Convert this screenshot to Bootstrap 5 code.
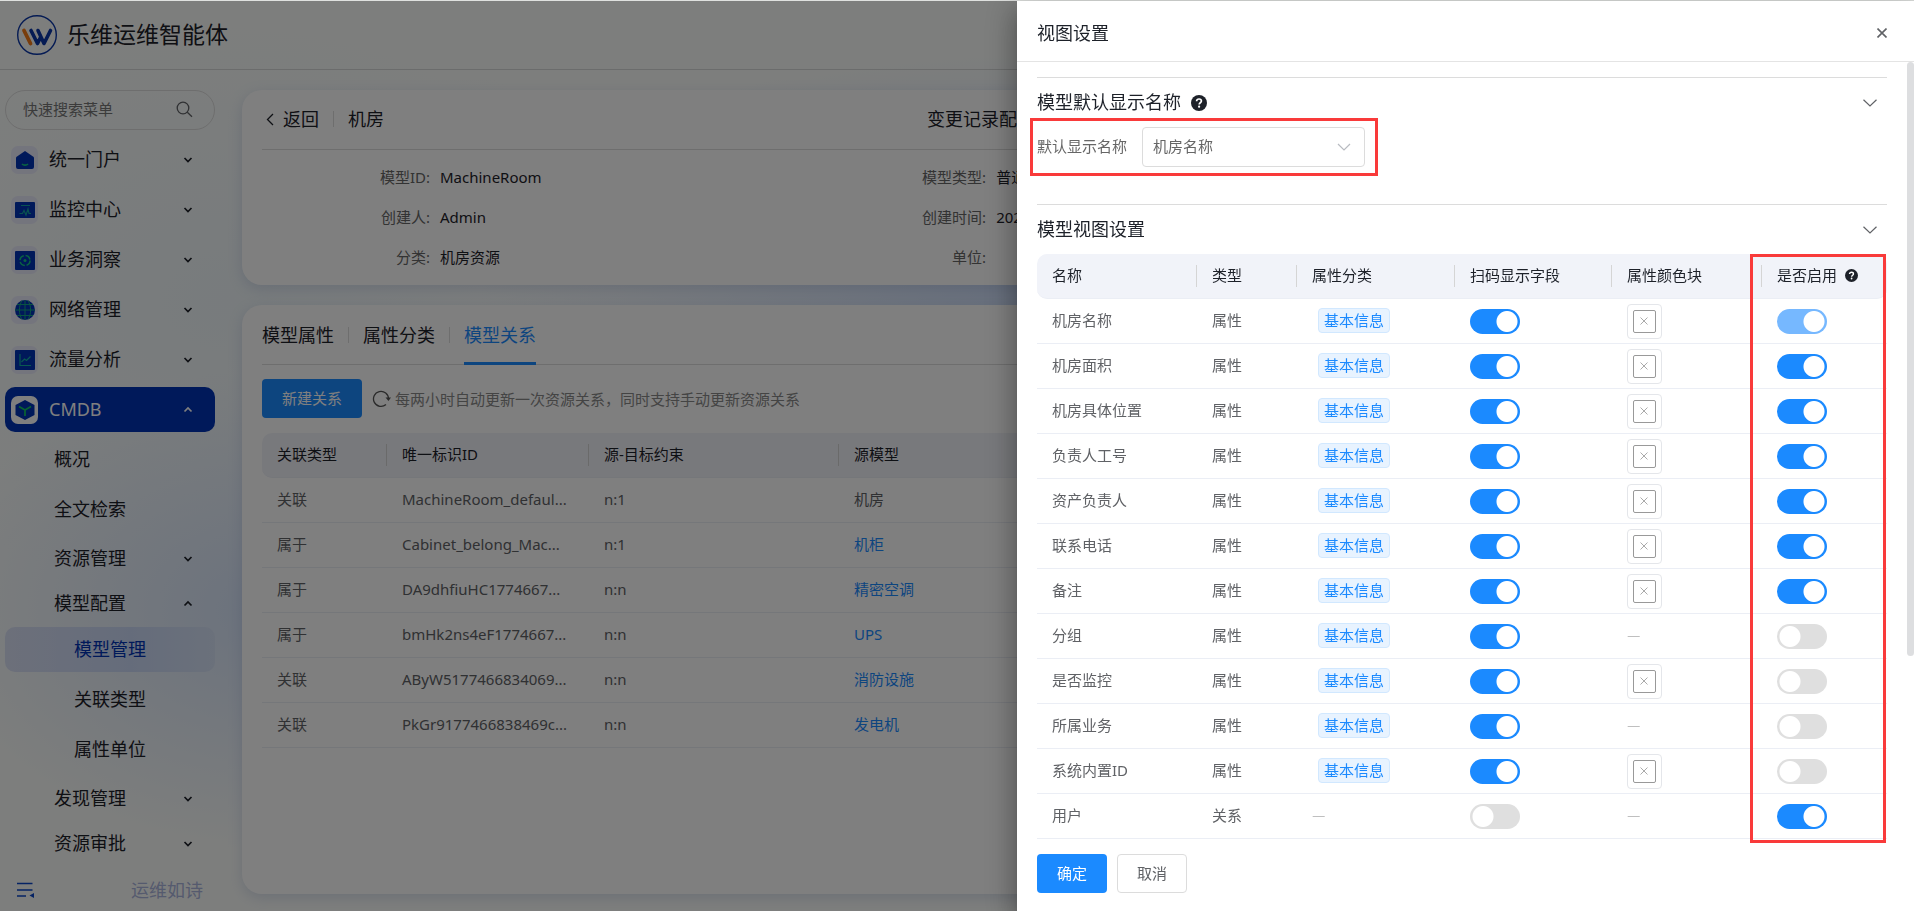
<!DOCTYPE html>
<html lang="zh-CN">
<head>
<meta charset="utf-8">
<meta name="viewport" content="width=device-width, initial-scale=1">
<title>乐维运维智能体</title>
<link href="https://cdn.jsdelivr.net/npm/bootstrap@5.3.0/dist/css/bootstrap.min.css" rel="stylesheet">
<style>
:root { --ink:#1d2129; --muted:#666; --brand:#1b8aff; --navy:#0032b4; --line:#dcdcdc; }
body { font:400 15px/22px "Noto Sans","Noto Sans CJK SC",sans-serif; color:var(--ink); height:100vh; overflow:hidden; border-top:1px solid #dfe1df; display:flex; flex-direction:column;
  background:radial-gradient(340px 240px at 270px 610px,#d6e4fa,transparent),radial-gradient(560px 240px at 1040px 290px,#cfdffa,transparent),radial-gradient(400px 300px at 230px 300px,#f0f7fa,transparent),#fbfdfb; }
a { color:inherit; text-decoration:none; }
svg { display:block; fill:none; flex:none; }
.fs-item { font-size:18px; line-height:26px; }
.topbar { height:69px; padding:0 17px; gap:10px; border-bottom:1px solid #d6d8d8; flex:none; }
.topbar h1 { font-size:23px; line-height:32px; padding-bottom:2px; }
.side { width:242px; padding:20px 27px 0 5px; flex:none; }
.search { height:40px; border:1px solid var(--line); border-radius:20px; padding:0 21px 2px 17px; margin-bottom:7px; }
.search input { border:0; padding:0; background:none; outline:0; min-width:0; flex:1; color:var(--ink); }
.search input::placeholder { color:#777; opacity:1; }
.menu a { height:45px; padding:0 22px 0 6px; margin-bottom:5px; border-radius:10px; color:var(--ink); font-size:18px; line-height:26px; }
.menu a > .flex-fill { padding-bottom:2px; }
.menu a.tight { margin-bottom:0; }
.menu a.sub { padding-left:49px; padding-bottom:2px; }
.menu a.leaf { padding-left:69px; padding-bottom:2px; }
.menu a.open { background:var(--navy); color:#fff; }
.menu a.current { background:linear-gradient(90deg,#d9e0f5,#cbd9f7 60%,#d6e2f7); color:var(--navy); }
.menu .tile { width:27px; height:28px; border-radius:7px; background:#e9eafb; margin-right:11px; }
.menu .open .tile { background:#fff; }
.side-foot { color:#aab4dd; padding:10px 12px 0; }
.panel { background:#fff; border-radius:20px; box-shadow:0 4px 14px rgba(120,140,190,.25); padding:0 20px; }
.main { padding:20px 20px 17px 0; gap:20px; }
.panel-head { height:60px; border-bottom:1px solid var(--line); padding-bottom:1px; }
.vr-thin { width:1px; height:16px; background:var(--line); margin:0 14px; }
.head-left { flex:0 0 41.25%; }
.back-link { gap:9px; }
.facts { display:grid; grid-template-columns:34.5% 34.5% 1fr; row-gap:18px; padding:16px 0 17px; }
.facts > div { display:flex; }
.facts dt { font-weight:400; width:168px; text-align:right; color:var(--muted); margin-right:10px; }
.facts dd { margin:0; }
.tabs { padding-bottom:0; }
.tabs a { height:60px; display:flex; align-items:center; border-bottom:3px solid transparent; padding-top:2px; margin-bottom:-1px; }
.tabs a.on { color:var(--brand); border-color:var(--brand); }
.tools { padding:14px 0 15px; }
.tools svg { margin:0 4px 0 10px; }
.btn { font-size:15px; line-height:22px; height:39px; padding:0 19px 2px; border-radius:4px; }
.btn-main, .btn-main:hover { background:var(--brand); color:#fff; }
.btn-plain { border:1px solid var(--line); color:#606266; background:#fff; }
.grid-table { width:100%; table-layout:fixed; border-collapse:separate; border-spacing:0; }
.grid-table th, .grid-table td { height:45px; padding:0 15px 2px; vertical-align:middle; border-bottom:1px solid #ebeef5; white-space:nowrap; }
.grid-table td { color:#606266; }
.grid-table th { font-weight:400; background:linear-gradient(#d5d5d5,#d5d5d5) right center/1px 22px no-repeat #f1f3f9; }
.grid-table th:first-child { border-radius:10px 0 0 10px; }
.grid-table th:last-child { border-radius:0 10px 10px 0; background:#f1f3f9; }
.grid-table a { color:var(--brand); }
.offcanvas.drawer { --bs-offcanvas-width:46.87%; top:1px; border:0; color:var(--ink); box-shadow:0 8px 10px -5px rgba(0,0,0,.2),0 16px 24px 2px rgba(0,0,0,.14),0 6px 30px 5px rgba(0,0,0,.22); }
.veil { position:fixed; inset:1px 0 0; z-index:1040; background:rgba(0,0,0,.5); }
.drawer-head { height:61px; border-bottom:1px solid #e4e4e4; padding:4px 27px 0 20px; }
.drawer-main { position:relative; padding:15px 27px 0 20px; overflow:hidden; }
.section-head { border-top:1px solid var(--line); height:50px; padding-right:10px; gap:10px; }
.section-head h3 { padding-bottom:1px; }
.icon-btn { border:0; background:none; padding:0; color:#606266; }
.name-row { position:relative; height:40px; margin-bottom:37px; gap:15px; width:fit-content; }
.name-row label { color:#666; padding-bottom:2px; }
.name-row .form-select { width:223px; height:40px; font-size:15px; line-height:22px; padding:0 10px 2px; border:1px solid var(--line); border-radius:4px; color:#666;
  background:url("data:image/svg+xml,%3Csvg xmlns='http://www.w3.org/2000/svg' viewBox='0 0 14 8'%3E%3Cpath d='M1 1l6 6 6-6' fill='none' stroke='%23b8bbc1' stroke-width='1.2'/%3E%3C/svg%3E") right 13px center/14px 8px no-repeat #fff; }
.ring { position:absolute; border:3px solid #f93a3a; pointer-events:none; }
.ring-name { inset:-9px -13px -9px -7px; }
.ring-col { top:0; bottom:-4px; right:1px; width:136px; }
.tag-pill { display:inline-block; margin-left:6px; padding:0 5px; height:25px; line-height:22px; border:1px solid #d1e8ff; border-radius:4px; background:#e8f3ff; color:var(--brand); }
.toggle { appearance:none; display:block; margin:2px 0 0; width:50px; height:25px; border-radius:13px; background:radial-gradient(circle at 37px 50%,#fff 10px,transparent 11px) var(--brand); }
.toggle:not(:checked) { background:radial-gradient(circle at 13px 50%,#fff 10px,transparent 11px) #dfdfdf; }
.toggle:disabled { background-color:#76b8ff; }
.swatch { display:flex; width:35px; height:35px; margin-top:2px; padding:5px; border:1px solid #e4e6ea; border-radius:4px; background:#fff; }
.swatch span { flex:1; display:flex; align-items:center; justify-content:center; border:1px solid #999; border-radius:2px; color:#aaa; }
.none-mark { color:#bbb; font-family:"Noto Sans CJK SC",sans-serif; }
.scroll-thumb { position:absolute; right:0; top:0; width:7px; height:76%; border-radius:4px; background:#dddee0; }
.drawer-foot { padding:10px 20px 18px; gap:10px; }
</style>
</head>
<body>
<svg width="0" height="0" class="position-absolute" aria-hidden="true">
  <symbol id="down" viewBox="0 0 10 8"><path d="M1.5 2l3.500 3.500L8.500 2" stroke="currentColor" stroke-width="1.700"/></symbol>
  <symbol id="up" viewBox="0 0 10 8"><path d="M1.500 5.500L5 2l3.500 3.500" stroke="currentColor" stroke-width="1.700"/></symbol>
  <symbol id="fold" viewBox="0 0 14 8"><path d="M.5 .8L7 7 13.500 .8" stroke="currentColor" stroke-width="1.200"/></symbol>
  <symbol id="help" viewBox="0 0 16 16"><circle cx="8" cy="8" r="8" fill="#1d2129"/><path d="M5.600 6.300C5.600 4.800 6.600 4 8 4s2.400.8 2.400 2.100c0 1.600-2.200 1.700-2.200 3.300" fill="none" stroke="#fff" stroke-width="1.700"/><circle cx="8.100" cy="11.700" r="1.100" fill="#fff"/></symbol>
</svg>

<header class="topbar d-flex align-items-center">
  <svg width="40" height="40" viewBox="0 0 40 40"><circle cx="20" cy="20" r="19.300" stroke="#0a36a8" stroke-width="1.400"/><path d="M7 15.500l6.500 13" stroke="#f27a18" stroke-width="3.800" stroke-linecap="round"/><path d="M14 15.500l6.500 13 3-6M21 15.500l6 13L33.500 15.500" stroke="#0a36a8" stroke-width="3.600" stroke-linecap="round" stroke-linejoin="round"/></svg>
  <h1 class="m-0 fw-normal">乐维运维智能体</h1>
</header>

<div class="d-flex flex-fill" style="min-height:0">
  <aside class="side d-flex flex-column">
    <form class="search d-flex align-items-center">
      <input type="search" placeholder="快速搜索菜单" aria-label="快速搜索菜单">
      <button class="icon-btn" type="button" aria-label="搜索"><svg width="17" height="17" viewBox="0 0 17 17" stroke="currentColor" stroke-width="1.300"><circle cx="7" cy="7" r="5.800"/><path d="M11.300 11.300l4.700 4.400"/></svg></button>
    </form>
    <nav class="menu">
      <a href="#" class="d-flex align-items-center"><span class="tile d-flex align-items-center justify-content-center"><svg width="20" height="20" viewBox="0 0 20 20"><path d="M10 1l8 5.500a2 2 0 0 1 1 1.500v9a2 2 0 0 1-2 2H3a2 2 0 0 1-2-2V8a2 2 0 0 1 1-1.500z" fill="#0032b4"/><path d="M7 14c1.500 1.500 4.500 1.500 6 0" stroke="#12c782" stroke-width="1.600"/></svg></span><span class="flex-fill">统一门户</span><svg width="10" height="8"><use href="#down"/></svg></a>
      <a href="#" class="d-flex align-items-center"><span class="tile d-flex align-items-center justify-content-center"><svg width="20" height="20" viewBox="0 0 20 20"><rect y="2" width="20" height="16" rx="1" fill="#0032b4"/><path d="M6 5.500h9M4.500 13.500h3l1.500-3 2 4.500 2-6 1 4.500h2" stroke="#12a5a0" stroke-width="1.200"/></svg></span><span class="flex-fill">监控中心</span><svg width="10" height="8"><use href="#down"/></svg></a>
      <a href="#" class="d-flex align-items-center"><span class="tile d-flex align-items-center justify-content-center"><svg width="20" height="20" viewBox="0 0 20 20"><rect y="1" width="20" height="19" rx="1" fill="#0032b4"/><circle cx="10" cy="10.500" r="5" stroke="#12c782" stroke-width="1.500" stroke-dasharray="6 1.850"/><circle cx="10" cy="10.500" r="1.500" fill="#12c782"/></svg></span><span class="flex-fill">业务洞察</span><svg width="10" height="8"><use href="#down"/></svg></a>
      <a href="#" class="d-flex align-items-center"><span class="tile d-flex align-items-center justify-content-center"><svg width="20" height="20" viewBox="0 0 20 20"><circle cx="10" cy="10" r="10" fill="#0032b4"/><path d="M10 0v20M0 10h20M2 4.500h16M2 15.500h16M7 .5c-3.500 6-3.500 13 0 19M13 .5c3.500 6 3.500 13 0 19" stroke="#12a582"/></svg></span><span class="flex-fill">网络管理</span><svg width="10" height="8"><use href="#down"/></svg></a>
      <a href="#" class="d-flex align-items-center"><span class="tile d-flex align-items-center justify-content-center"><svg width="20" height="20" viewBox="0 0 20 20"><rect y="0" width="20" height="20" rx="1" fill="#0032b4"/><path d="M5 4v11.500h11M6.500 12l3-3 2 1.500 4-4" stroke="#12b0a0" stroke-width="1.200"/></svg></span><span class="flex-fill">流量分析</span><svg width="10" height="8"><use href="#down"/></svg></a>
      <a href="#" class="open d-flex align-items-center"><span class="tile d-flex align-items-center justify-content-center"><svg width="20" height="20" viewBox="0 0 20 20"><path d="M10 0l9.500 5v10L10 20 .5 15V5z" fill="#0032b4"/><path d="M4 6.500l6 3.500 6-3.500M10 10v6" stroke="#12c762" stroke-width="1.700"/></svg></span><span class="flex-fill">CMDB</span><svg width="10" height="8"><use href="#up"/></svg></a>
      <a href="#" class="sub d-flex align-items-center">概况</a>
      <a href="#" class="sub d-flex align-items-center">全文检索</a>
      <a href="#" class="sub tight d-flex align-items-center"><span class="flex-fill">资源管理</span><svg width="10" height="8"><use href="#down"/></svg></a>
      <a href="#" class="sub tight d-flex align-items-center"><span class="flex-fill">模型配置</span><svg width="10" height="8"><use href="#up"/></svg></a>
      <a href="#" class="leaf current d-flex align-items-center">模型管理</a>
      <a href="#" class="leaf d-flex align-items-center">关联类型</a>
      <a href="#" class="leaf d-flex align-items-center">属性单位</a>
      <a href="#" class="sub tight d-flex align-items-center"><span class="flex-fill">发现管理</span><svg width="10" height="8"><use href="#down"/></svg></a>
      <a href="#" class="sub tight d-flex align-items-center"><span class="flex-fill">资源审批</span><svg width="10" height="8"><use href="#down"/></svg></a>
    </nav>
    <div class="side-foot d-flex align-items-center justify-content-between fs-item">
      <button class="icon-btn" type="button" aria-label="收起菜单"><svg width="18" height="16" viewBox="0 0 18 16"><path d="M0 1.500h15.500M0 8h15.500M0 14h9" stroke="#0a46c8" stroke-width="1.500"/><path d="M12.500 13.500L17 11v5z" fill="#0a46c8"/></svg></button>
      <span>运维如诗</span>
    </div>
  </aside>

  <main class="main d-flex flex-column flex-fill" style="min-width:0">
    <section class="panel">
      <div class="panel-head d-flex align-items-center fs-item">
        <div class="head-left d-flex align-items-center">
          <a href="#" class="back-link d-flex align-items-center ps-1"><svg width="8" height="13" viewBox="0 0 8 13"><path d="M7 1L1.500 6.500 7 12" stroke="currentColor" stroke-width="1.300"/></svg>返回</a>
          <span class="vr-thin"></span><span>机房</span>
        </div>
        <a href="#">变更记录配置</a>
      </div>
      <dl class="facts m-0">
        <div><dt>模型ID:</dt><dd>MachineRoom</dd></div><div><dt>模型类型:</dt><dd>普通</dd></div><div></div>
        <div><dt>创建人:</dt><dd>Admin</dd></div><div><dt>创建时间:</dt><dd>2026</dd></div><div></div>
        <div><dt>分类:</dt><dd>机房资源</dd></div><div><dt>单位:</dt><dd></dd></div>
      </dl>
    </section>
    <section class="panel flex-fill">
      <nav class="tabs panel-head d-flex align-items-center fs-item">
        <a href="#">模型属性</a><span class="vr-thin"></span><a href="#">属性分类</a><span class="vr-thin"></span><a href="#" class="on">模型关系</a>
      </nav>
      <div class="tools d-flex align-items-center">
        <button class="btn btn-main" type="button">新建关系</button>
        <svg width="19" height="18" viewBox="0 0 19 18"><path d="M14 14.500A7.500 7.500 0 1 1 16.500 9" stroke="#555" stroke-width="1.300"/><path d="M13.500 7.500h5.500L16.500 11z" fill="#555"/></svg>
        <span style="color:#888">每两小时自动更新一次资源关系，同时支持手动更新资源关系</span>
      </div>
      <table class="grid-table">
        <colgroup><col style="width:125px"><col style="width:202px"><col style="width:250px"><col></colgroup>
        <thead><tr><th>关联类型</th><th>唯一标识ID</th><th>源-目标约束</th><th>源模型</th></tr></thead>
        <tbody>
          <tr><td>关联</td><td>MachineRoom_defaul...</td><td>n:1</td><td>机房</td></tr>
          <tr><td>属于</td><td>Cabinet_belong_Mac...</td><td>n:1</td><td><a href="#">机柜</a></td></tr>
          <tr><td>属于</td><td>DA9dhfiuHC1774667...</td><td>n:n</td><td><a href="#">精密空调</a></td></tr>
          <tr><td>属于</td><td>bmHk2ns4eF1774667...</td><td>n:n</td><td><a href="#">UPS</a></td></tr>
          <tr><td>关联</td><td>AByW5177466834069...</td><td>n:n</td><td><a href="#">消防设施</a></td></tr>
          <tr><td>关联</td><td>PkGr9177466838469c...</td><td>n:n</td><td><a href="#">发电机</a></td></tr>
        </tbody>
      </table>
    </section>
  </main>
</div>

<div class="veil"></div>
<div class="offcanvas offcanvas-end show drawer" data-bs-backdrop="false" data-bs-scroll="true" tabindex="-1" aria-labelledby="drawerTitle">
  <div class="drawer-head d-flex align-items-center justify-content-between">
    <h2 class="m-0 fw-normal fs-item" id="drawerTitle">视图设置</h2>
    <button class="icon-btn" type="button" aria-label="关闭"><svg width="10" height="10" viewBox="0 0 10 10"><path d="M.5 .5l9 9M9.500 .5l-9 9" stroke="currentColor" stroke-width="1.600"/></svg></button>
  </div>
  <div class="drawer-main flex-fill">
    <div class="section-head d-flex align-items-center">
      <h3 class="m-0 fw-normal fs-item">模型默认显示名称</h3>
      <svg width="16" height="16"><use href="#help"/></svg>
      <button class="icon-btn ms-auto" type="button" aria-label="折叠"><svg width="14" height="8"><use href="#fold"/></svg></button>
    </div>
    <div class="name-row d-flex align-items-center">
      <label for="showName">默认显示名称</label>
      <select id="showName" class="form-select"><option>机房名称</option></select>
      <div class="ring ring-name"></div>
    </div>
    <div class="section-head d-flex align-items-center">
      <h3 class="m-0 fw-normal fs-item">模型视图设置</h3>
      <button class="icon-btn ms-auto" type="button" aria-label="折叠"><svg width="14" height="8"><use href="#fold"/></svg></button>
    </div>
    <div class="position-relative">
      <table class="grid-table">
        <colgroup><col style="width:160px"><col style="width:100px"><col style="width:158px"><col style="width:157px"><col style="width:150px"><col></colgroup>
        <thead><tr><th>名称</th><th>类型</th><th>属性分类</th><th>扫码显示字段</th><th>属性颜色块</th><th><span class="d-flex align-items-center gap-2">是否启用<svg width="13" height="13" viewBox="0 0 16 16"><use href="#help"/></svg></span></th></tr></thead>
        <tbody id="fields"></tbody>
      </table>
      <div class="ring ring-col"></div>
    </div>
    <div class="scroll-thumb"></div>
  </div>
  <div class="drawer-foot d-flex">
    <button class="btn btn-main" type="button">确定</button>
    <button class="btn btn-plain" type="button">取消</button>
  </div>
</div>

<script src="https://cdn.jsdelivr.net/npm/bootstrap@5.3.0/dist/js/bootstrap.bundle.min.js"></script>
<script>
// name, type, category, scan display, has colour block, enabled, locked
const fields = [
  ["机房名称", "属性", "基本信息", true, true, true, true],
  ["机房面积", "属性", "基本信息", true, true, true],
  ["机房具体位置", "属性", "基本信息", true, true, true],
  ["负责人工号", "属性", "基本信息", true, true, true],
  ["资产负责人", "属性", "基本信息", true, true, true],
  ["联系电话", "属性", "基本信息", true, true, true],
  ["备注", "属性", "基本信息", true, true, true],
  ["分组", "属性", "基本信息", true, false, false],
  ["是否监控", "属性", "基本信息", true, true, false],
  ["所属业务", "属性", "基本信息", true, false, false],
  ["系统内置ID", "属性", "基本信息", true, true, false],
  ["用户", "关系", "", false, false, true]
];
const none = '<span class="none-mark">—</span>';
const toggle = (label, on, locked) =>
  `<input class="toggle" type="checkbox" role="switch" aria-label="${label}"${on ? " checked" : ""}${locked ? " disabled" : ""}>`;
const swatch = '<button type="button" class="swatch" aria-label="颜色"><span><svg width="8" height="8" viewBox="0 0 8 8"><path d="M.5 .5l7 7M7.500 .5l-7 7" stroke="currentColor"/></svg></span></button>';
document.getElementById("fields").innerHTML = fields.map(([name, type, cat, scan, color, on, locked]) =>
  `<tr><td>${name}</td><td>${type}</td><td>${cat ? `<span class="tag-pill">${cat}</span>` : none}</td><td>${toggle(name + " 扫码显示", scan)}</td><td>${color ? swatch : none}</td><td>${toggle(name + " 启用", on, locked)}</td></tr>`).join("");
</script>
</body>
</html>
